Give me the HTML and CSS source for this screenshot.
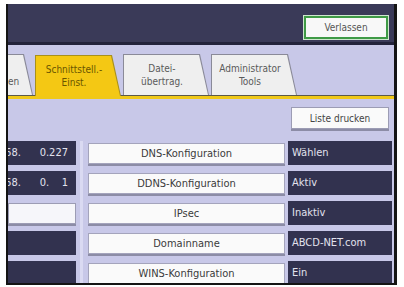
FILE: index.html
```html
<!DOCTYPE html>
<html lang="de">
<head>
    <meta charset="UTF-8">
    <title>Schnittstelleneinstellungen</title>
    <link rel="stylesheet" href="styles.css">
</head>
<body>
<div class="screen">
    <div class="topbar">
        <button class="exit-button">Verlassen</button>
    </div>
    <div class="tabbar">
        <div class="tab tab-cut"><div class="tab-face"><span>&nbsp;</span><span>en</span></div></div>
        <div class="tab tab-active"><div class="tab-face"><span>Schnittstell.-</span><span>Einst.</span></div></div>
        <div class="tab"><div class="tab-face"><span>Datei-</span><span>übertrag.</span></div></div>
        <div class="tab"><div class="tab-face"><span>Administrator</span><span>Tools</span></div></div>
    </div>
    <div class="tab-line"></div>
    <div class="panel">
        <div class="panel-tools">
            <button class="print-button">Liste drucken</button>
        </div>
        <div class="rows">
            <div class="row">
                <div class="cell-left dark"><span>192.168.      0.227</span></div>
                <button class="item-button">DNS-Konfiguration</button>
                <div class="cell-value">Wählen</div>
            </div>
            <div class="row">
                <div class="cell-left dark"><span>192.168.      0.    1</span></div>
                <button class="item-button">DDNS-Konfiguration</button>
                <div class="cell-value">Aktiv</div>
            </div>
            <div class="row">
                <div class="cell-left light"></div>
                <button class="item-button">IPsec</button>
                <div class="cell-value">Inaktiv</div>
            </div>
            <div class="row">
                <div class="cell-left dark"></div>
                <button class="item-button">Domainname</button>
                <div class="cell-value">ABCD-NET.com</div>
            </div>
            <div class="row">
                <div class="cell-left dark"></div>
                <button class="item-button">WINS-Konfiguration</button>
                <div class="cell-value">Ein</div>
            </div>
        </div>
    </div>
</div>
</body>
</html>
```

FILE: styles.css
```css
* {
    box-sizing: border-box;
    margin: 0;
    padding: 0;
    font-family: "DejaVu Sans Condensed", "Liberation Sans Narrow", sans-serif;
}

html, body {
    height: 100%;
    overflow: hidden;
    background-color: #fff;
}

.screen {
    margin: 4px 7px 0 6px;
    height: 281px;
    border: 2px solid #141414;
    border-top: none;
    border-right-width: 3px;
    overflow: hidden;
    display: flex;
    flex-direction: column;
    background-color: #c8c8e8;
}

.topbar {
    flex: none;
    height: 41px;
    background-color: #3a3a58;
    border-bottom: 3px solid #23233b;
    display: flex;
    justify-content: flex-end;
    align-items: flex-start;
    padding: 12px 6px 0 0;
}

.exit-button {
    width: 84px;
    height: 23px;
    background-color: #f8f8f8;
    border: 2px solid #3f9a46;
    box-shadow: 0 0 0 1px #cfe6cf;
    color: #555;
    font-size: 10px;
}

.tabbar {
    flex: none;
    height: 50px;
    display: flex;
    align-items: flex-end;
    gap: 2px;
}

.tab {
    flex: none;
    width: 86px;
    height: 41px;
    padding: 1px 1px 0 1px;
    background-color: #8a8a98;
    clip-path: polygon(0 0, calc(100% - 9px) 0, 100% 100%, 0 100%);
}

.tab-face {
    height: 100%;
    padding-right: 8px;
    background-color: #efefef;
    clip-path: polygon(0 0, calc(100% - 9px) 0, 100% 100%, 0 100%);
    display: flex;
    flex-direction: column;
    justify-content: center;
    align-items: center;
    color: #5a5a5a;
    font-size: 10px;
    line-height: 13px;
}

.tab-cut {
    width: 30px;
    margin-left: -5px;
}

.tab-cut .tab-face {
    align-items: flex-start;
    padding-left: 4px;
}

.tab-active {
    position: relative;
    z-index: 1;
    margin-bottom: -1px;
    background-color: #a8901c;
}

.tab-active .tab-face {
    background-color: #f4c814;
    color: #6a5600;
}

.tab-line {
    flex: none;
    height: 4px;
    background-color: #f0c818;
    border-top: 1px solid #5c5a48;
}

.panel {
    flex: 1;
    display: flex;
    flex-direction: column;
}

.panel-tools {
    display: flex;
    justify-content: flex-end;
    padding: 8px 5px 0 0;
}

.print-button {
    width: 98px;
    height: 22px;
    background-color: #fafafa;
    border: 1px solid #9c9cb4;
    box-shadow: 0 2px 0 #8c8ca6;
    color: #444;
    font-size: 10px;
}

.rows {
    margin-top: 12px;
    display: flex;
    flex-direction: column;
    gap: 6px;
    background: linear-gradient(to right, transparent 72px, #dadaf2 72px, #dadaf2 75px, transparent 75px);
}

.row {
    height: 24px;
    display: flex;
}

.cell-left {
    width: 68px;
    padding-right: 8px;
    display: flex;
    justify-content: flex-end;
    white-space: pre;
    font-size: 11px;
    line-height: 24px;
}

.dark {
    background-color: #32324f;
    color: #e2e2ee;
}

.light {
    margin: 2px 0 0;
    height: 21px;
    background-color: #f6f6fa;
    border: 1px solid #9c9cb4;
    box-shadow: 0 2px 0 #8c8ca6;
}

.item-button {
    width: 197px;
    height: 21px;
    margin: 2px 0 0 12px;
    background-color: #fafafa;
    border: 1px solid #a4a4bc;
    box-shadow: 0 2px 0 #8c8ca6;
    color: #3a3a3a;
    font-size: 11px;
}

.cell-value {
    width: 104px;
    margin-left: 3px;
    padding-left: 4px;
    background-color: #32324f;
    color: #e2e2ee;
    font-size: 11px;
    line-height: 24px;
}
```
